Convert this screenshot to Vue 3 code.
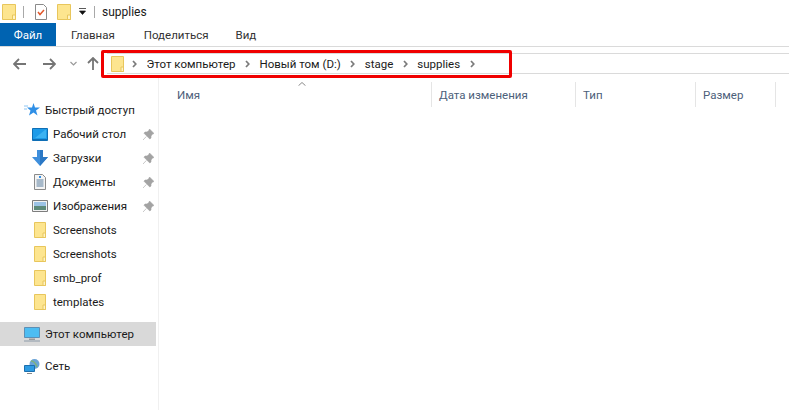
<script setup>
const quick = [
  { name: 'Рабочий стол', icon: 'desktop', pin: true },
  { name: 'Загрузки', icon: 'down', pin: true },
  { name: 'Документы', icon: 'doc', pin: true },
  { name: 'Изображения', icon: 'pic', pin: true },
  { name: 'Screenshots', icon: 'folder' },
  { name: 'Screenshots', icon: 'folder' },
  { name: 'smb_prof', icon: 'folder' },
  { name: 'templates', icon: 'folder' },
]
const crumbs = ['Этот компьютер', 'Новый том (D:)', 'stage', 'supplies']
const cols = [
  { name: 'Имя', w: 273, pad: 18 },
  { name: 'Дата изменения', w: 144, pad: 7 },
  { name: 'Тип', w: 120, pad: 7 },
  { name: 'Размер', w: 80, pad: 7 },
]
</script>

<template>
  <div class="win">
    <div class="title">
      <svg class="folder" width="14" height="16" viewBox="0 0 14 16"><path d="M.5.5h13v15H.5z" fill="#fde58f" stroke="#e8c65c"/><path d="M10.5 11v4.500h3V11z" fill="#fff3c4" stroke="#e8c65c"/></svg>
      <span class="vsep first"></span>
      <svg class="check" width="12" height="16" viewBox="0 0 12 16"><path d="M.5.5h8l3 3v12H.5z" fill="#fff" stroke="#8a8a8a"/><path d="M3 8l2 2.500L9 6" fill="none" stroke="#e2572b" stroke-width="1.500"/></svg>
      <svg class="folder second" width="14" height="16" viewBox="0 0 14 16"><path d="M.5.5h13v15H.5z" fill="#fde58f" stroke="#e8c65c"/><path d="M10.500 11v4.500h3V11z" fill="#fff3c4" stroke="#e8c65c"/></svg>
      <svg class="qat" width="7" height="7" viewBox="0 0 7 7"><path d="M0 .5h7M.5 3h6L3.500 6.500z" fill="#111" stroke="#111" stroke-width=".7"/></svg>
      <span class="vsep last"></span>
      <span class="title-text">supplies</span>
    </div>

    <div class="tabs">
      <div class="tab file">Файл</div>
      <div class="tab main">Главная</div>
      <div class="tab share">Поделиться</div>
      <div class="tab view">Вид</div>
    </div>

    <div class="nav">
      <div class="arrows">
        <svg width="13" height="12" viewBox="0 0 13 12"><path d="M6 1L1 6l5 5M1 6h12" fill="none" stroke="#757575" stroke-width="1.800"/></svg>
        <svg class="fwd" width="13" height="12" viewBox="0 0 13 12"><path d="M7 1l5 5-5 5M12 6H0" fill="none" stroke="#757575" stroke-width="1.800"/></svg>
        <svg class="drop" width="7" height="5" viewBox="0 0 7 5"><path d="M.5 1l3 3 3-3" fill="none" stroke="#9a9a9a" stroke-width="1.200"/></svg>
        <svg class="up" width="12" height="13" viewBox="0 0 12 13"><path d="M1 6l5-5 5 5M6 1v12" fill="none" stroke="#757575" stroke-width="1.800"/></svg>
      </div>
      <div class="address">
        <svg class="addr-folder" width="13" height="16" viewBox="0 0 13 16"><path d="M.5.5h12v15H.5z" fill="#fde58f" stroke="#e8c65c"/><path d="M10 11v4.500h2.500V11z" fill="#fff3c4" stroke="#e8c65c"/></svg>
        <template v-for="c in crumbs" :key="c">
          <svg class="chev" width="5" height="8" viewBox="0 0 5 8"><path d="M1 1l2.800 3L1 7" fill="none" stroke="#7a7a7a" stroke-width="1.700"/></svg>
          <span class="crumb">{{ c }}</span>
        </template>
        <svg class="chev" width="5" height="8" viewBox="0 0 5 8"><path d="M1 1l2.800 3L1 7" fill="none" stroke="#7a7a7a" stroke-width="1.700"/></svg>
      </div>
      <div class="callout"></div>
    </div>

    <div class="body">
      <aside class="side">
        <div class="top-item quick">
          <svg width="16" height="14" viewBox="0 0 16 14"><path d="M9.500 0l1.500 4.500h5l-4 3 1.500 5-4-3-4.500 3L6.500 7.500 3 4.500h5z" fill="#2f8fe6"/><path d="M0 3h4M0 6h3" stroke="#8cc4f2"/></svg>
          <span>Быстрый доступ</span>
        </div>
        <div v-for="(q, i) in quick" :key="i" class="item">
          <span class="ic">
            <svg v-if="q.icon === 'desktop'" width="16" height="13" viewBox="0 0 16 13"><path d="M.5.500h15v12H.5z" fill="#1e9be8" stroke="#0f6fb5"/><path d="M1 11h14v1.500H1z" fill="#0f6fb5"/><path d="M13 2L3 10h11V2z" fill="#3db3f2"/></svg>
            <svg v-else-if="q.icon === 'down'" width="16" height="16" viewBox="0 0 16 16"><path d="M5 0h6v7h5l-8 9-8-9h5z" fill="#3f8fdc"/><path d="M8 0h3v7h5l-8 9z" fill="#2b78c5"/></svg>
            <svg v-else-if="q.icon === 'doc'" width="12" height="16" viewBox="0 0 12 16"><path d="M.5.500h8l3 3v12H.5z" fill="#f4f4f4" stroke="#8a8a8a"/><path d="M2.500 6h7M2.500 8h7M2.500 10h7M2.500 12h7" stroke="#5b7f9f"/><path d="M5 3h2" stroke="#2f8fe6" stroke-width="2"/></svg>
            <svg v-else-if="q.icon === 'pic'" width="16" height="12" viewBox="0 0 16 12"><path d="M.5.500h15v11H.5z" fill="#f2f2f2" stroke="#7d7d7d"/><path d="M2 2h12v4H2z" fill="#9cc3e6"/><path d="M2 6h12v4H2z" fill="#5d8a7a"/></svg>
            <svg v-else width="12" height="16" viewBox="0 0 12 16"><path d="M.5.500h11v15H.5z" fill="#fde58f" stroke="#e8c65c"/><path d="M9 11v4.500h2.500V11z" fill="#fff3c4" stroke="#e8c65c"/></svg>
          </span>
          <span class="label">{{ q.name }}</span>
          <svg v-if="q.pin" class="pin" width="11" height="11" viewBox="0 0 11 11"><path d="M6.500 0L11 4.500 9.500 5 8 7v2L6.800 10 1 4.200 2 3h2l2-1.500zM3.300 7.500L0 11" fill="#a3a3a3" stroke="#a3a3a3" stroke-width=".6"/></svg>
        </div>
        <div class="top-item pc">
          <svg width="16" height="15" viewBox="0 0 16 15"><path d="M.5.500h15v10H.5z" fill="#4dbdf2" stroke="#5c8fb5"/><path d="M5 11.500h6v1.500H5z" fill="#9a9a9a"/><path d="M0 14h16" stroke="#8c9aa8"/></svg>
          <span>Этот компьютер</span>
        </div>
        <div class="top-item net">
          <svg width="16" height="15" viewBox="0 0 16 15"><circle cx="10.500" cy="5" r="5" fill="#6aa3d6"/><path d="M7 2c3 0 5 3 6 6" stroke="#7fb27a" fill="none" stroke-width="1.500"/><path d="M.5 6.500h10v6H.5z" fill="#2d9be2" stroke="#1b6fae"/><path d="M3 14.500h5" stroke="#8a8a8a"/></svg>
          <span>Сеть</span>
        </div>
      </aside>
      <main class="list">
        <svg class="sort" width="8" height="4" viewBox="0 0 8 4"><path d="M.5 3.700L4 .5l3.500 3.200" fill="none" stroke="#8a8a8a"/></svg>
        <div class="head">
          <div v-for="c in cols" :key="c.name" class="col" :style="{ width: c.w + 'px', paddingLeft: c.pad + 'px' }">{{ c.name }}</div>
        </div>
      </main>
    </div>
  </div>
</template>

<style>
html, body { margin: 0; background: #fff; overflow: hidden; }
</style>

<style scoped>
.win {
  width: 789px;
  height: 410px;
  background: #fff;
  font-family: Roboto, "Open Sans", sans-serif;
  font-size: 11.500px;
  color: #1a1a1a;
  overflow: hidden;
}
.title { height: 23px; display: flex; align-items: center; padding-left: 2px; box-sizing: border-box; }
.title svg { flex: none; }
.vsep { width: 1px; height: 12px; background: #a8a8a8; flex: none; }
.vsep.first { margin: 0 11px 0 7px; }
.vsep.last { margin: 0 7px 0 8px; }
.check { margin-right: 10px; }
.qat { margin-left: 8px; }
.title-text { font-size: 12px; }
.tabs { height: 23px; display: flex; border-bottom: 1px solid #dadada; }
.tab { display: flex; align-items: center; color: #333; height: 23px; }
.file { background: #0063b1; color: #fff; width: 56px; justify-content: center; }
.main { margin-left: 15px; }
.share { margin-left: 29px; }
.view { margin-left: 27px; }
.nav { position: relative; height: 28px; display: flex; padding-top: 6px; box-sizing: border-box; }
.arrows { width: 107px; display: flex; align-items: center; padding: 0 0 0 13px; box-sizing: border-box; height: 21px; flex: none; }
.fwd { margin-left: 17px; }
.drop { margin-left: 14px; }
.up { margin-left: 10px; }
.address {
  flex: 1;
  height: 21px;
  border: 1px solid #dadada;
  border-left: 0;
  border-right: 0;
  box-sizing: border-box;
  display: flex;
  align-items: center;
  padding-left: 4px;
}
.addr-folder { margin-right: 8px; }
.chev { margin-right: 9.500px; flex: none; }
.crumb { margin-right: 9.500px; color: #1a1a1a; white-space: nowrap; }
.callout {
  position: absolute;
  left: 101px;
  top: 3px;
  width: 411px;
  height: 28px;
  border: 3px solid #f00000;
  border-radius: 2px;
  box-sizing: border-box;
}
.body { display: flex; height: 335px; }
.side { width: 159px; border-right: 1px solid #f0f0f0; box-sizing: border-box; padding-top: 23px; flex: none; }
.top-item { display: flex; align-items: center; height: 24px; padding-left: 24px; gap: 5px; width: 156px; box-sizing: border-box; white-space: nowrap; }
.top-item svg { flex: none; }
.item { display: flex; align-items: center; height: 24px; padding-left: 32px; width: 156px; box-sizing: border-box; position: relative; white-space: nowrap; }
.ic { width: 16px; margin-right: 5px; display: flex; justify-content: center; flex: none; }
.pin { position: absolute; left: 143px; top: 7px; }
.pc { background: #d9d9d9; margin-top: 8px; }
.net { margin-top: 8px; }
.list { position: relative; flex: 1; }
.sort { position: absolute; left: 139px; top: 7px; }
.head { display: flex; padding-top: 7px; }
.col { height: 25px; box-sizing: border-box; display: flex; align-items: center; color: #4c607a; border-right: 1px solid #e5e5e5; flex: none; }
</style>
